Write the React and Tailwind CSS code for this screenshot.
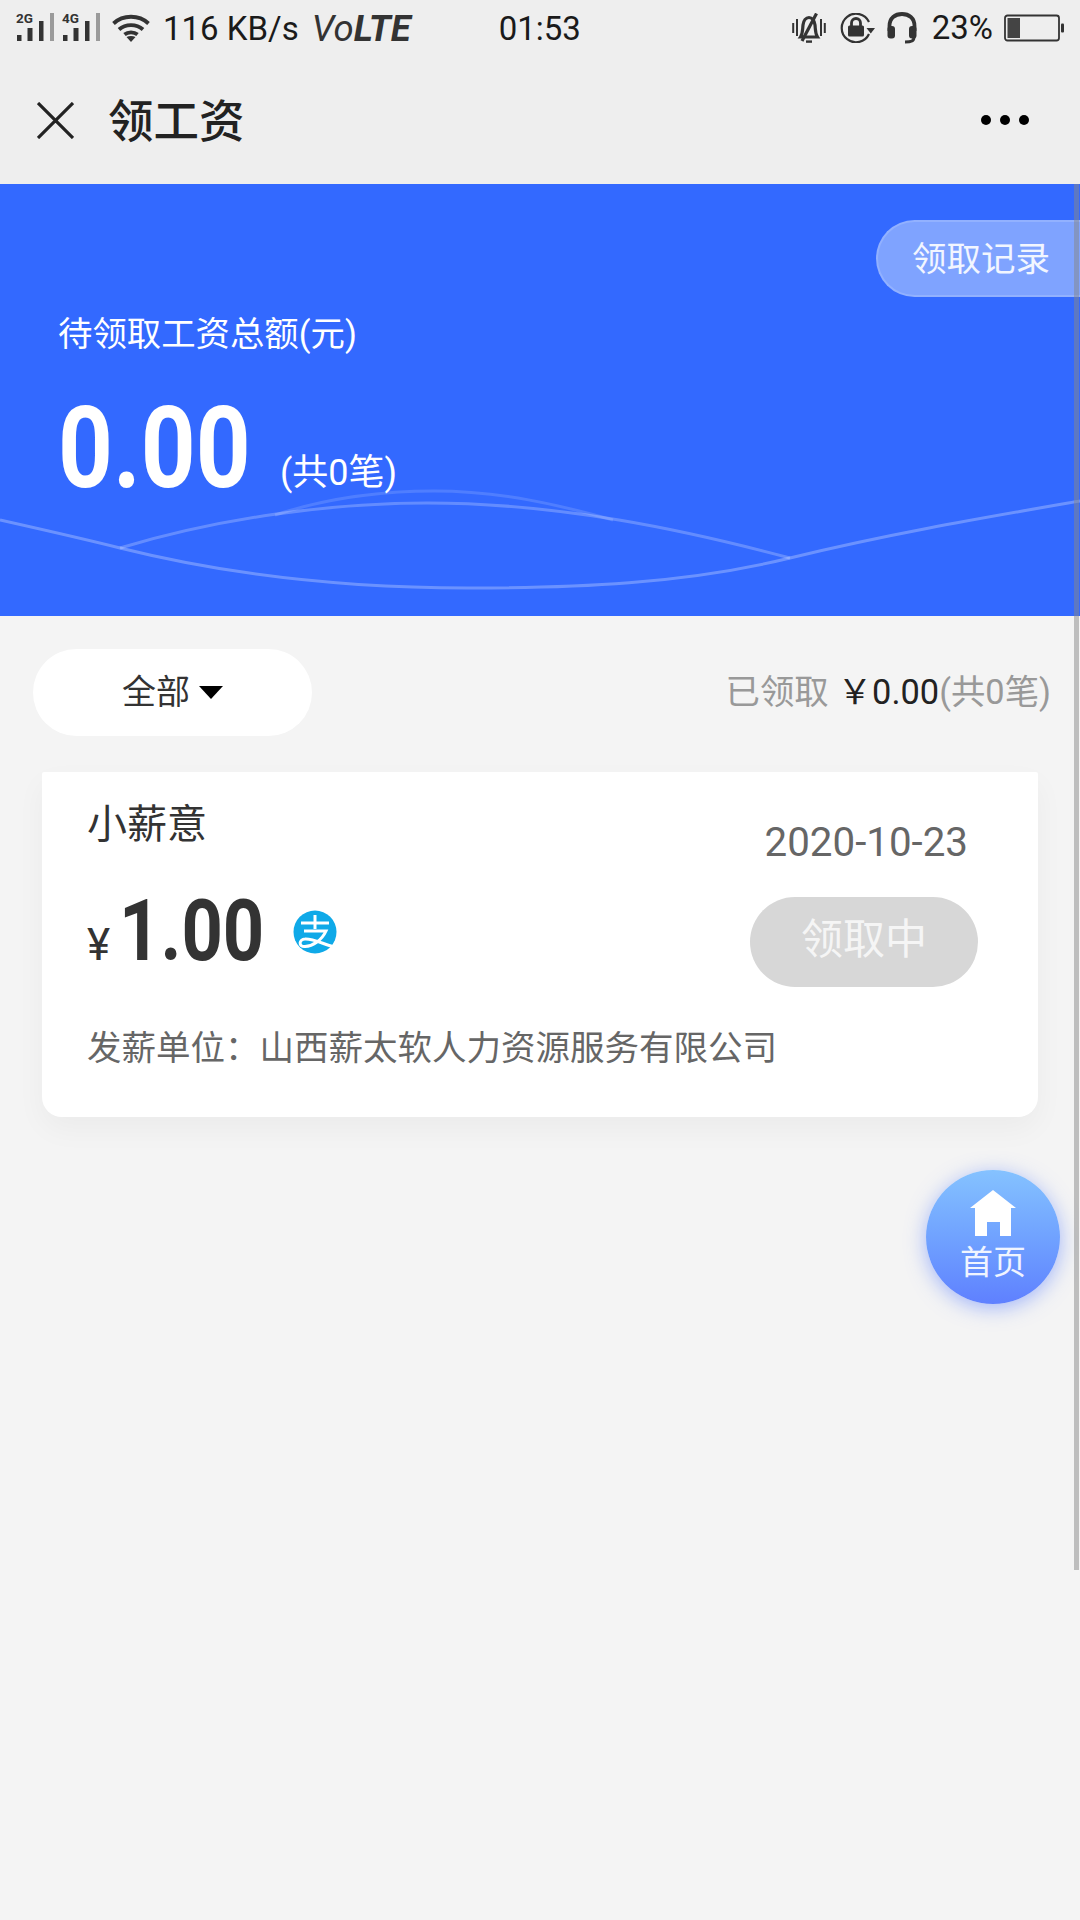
const cjk = { fontFamily: 'Roboto, "Noto Sans CJK SC", sans-serif' };

function Signal({ label }) {
  return (
    <svg width="38" height="30" viewBox="0 0 38 30" className="shrink-0 overflow-visible">
      <text x="0" y="10" fontSize="13.5" fontWeight="700" fill="#333" fontFamily="Roboto, sans-serif">{label}</text>
      <rect x="1" y="22" width="4.5" height="6" fill="#333" />
      <rect x="11.5" y="15" width="5" height="13" fill="#333" />
      <rect x="23" y="8" width="4.5" height="20" fill="#333" />
      <rect x="34" y="0" width="4" height="28" fill="#9a9a9a" />
    </svg>
  );
}

function Wifi() {
  return (
    <svg width="38" height="28" viewBox="0 0 38 28" fill="none" stroke="#333" strokeWidth="3.8" className="shrink-0">
      <path d="M1.5 9.5C11 0.5 27 0.5 36.5 9.5" />
      <path d="M7 15.5C13.5 9.6 24.5 9.6 31 15.5" />
      <path d="M12.5 20.5C16 17.6 22 17.6 25.5 20.5" />
      <path d="M14.5 23L19 28L23.5 23C21 21.6 17 21.6 14.5 23Z" fill="#333" stroke="none" />
    </svg>
  );
}

function Bell() {
  return (
    <svg width="34" height="30" viewBox="0 0 34 30" fill="none" stroke="#333" className="shrink-0">
      <path d="M1.2 10v10M5 6v17M29 6v17M32.8 10v10" strokeWidth="2" />
      <path d="M8.5 24C11 20 10.5 16 11 12C11.6 7.5 14 4.5 17 4.5C20 4.5 22.4 7.5 23 12C23.5 16 23 20 25.5 24Z" strokeWidth="3.2" />
      <path d="M24.5 0.5L10 28" strokeWidth="3.2" />
      <path d="M14 28.6h6" strokeWidth="2.4" />
    </svg>
  );
}

function RotateLock() {
  return (
    <svg width="36" height="30" viewBox="0 0 36 30" fill="none" className="shrink-0">
      <path d="M30 9A14.3 14.3 0 1 0 30 21" stroke="#333" strokeWidth="2.2" />
      <path d="M27.5 15h8.5l-4.2 5.5z" fill="#333" />
      <rect x="9" y="12.5" width="16" height="11" rx="1.5" fill="#333" />
      <path d="M12.5 13v-3a4.5 4.5 0 0 1 9 0v3" stroke="#333" strokeWidth="2.8" />
    </svg>
  );
}

function Headset() {
  return (
    <svg width="30" height="32" viewBox="0 0 30 32" fill="none" className="shrink-0">
      <path d="M2.5 19V14C2.5 6 8 2 15 2C22 2 27.5 6 27.5 14V19" stroke="#333" strokeWidth="3.8" />
      <rect x="0.5" y="14" width="7.5" height="12.5" rx="3" fill="#333" />
      <rect x="22" y="14" width="7.5" height="12.5" rx="3" fill="#333" />
      <path d="M27 25C27 29 24.5 30 18 30" stroke="#333" strokeWidth="3" />
    </svg>
  );
}

function Battery() {
  return (
    <svg width="60" height="28" viewBox="0 0 60 28" fill="none" className="shrink-0">
      <rect x="1" y="1.5" width="54" height="25" rx="2.5" stroke="#333" strokeWidth="1.8" />
      <rect x="3.5" y="4" width="12.5" height="20" fill="#444" />
      <rect x="57" y="9.5" width="3" height="9" rx="1" fill="#333" />
    </svg>
  );
}

function Waves() {
  return (
    <svg className="absolute inset-0 pointer-events-none" width="1080" height="432" viewBox="0 184 1080 432" fill="none">
      <path d="M0 520C40 529 80 538 120 548C236 577 352 588 468 588C574 588 684 584 790 558C888 534 982 518 1080 501" stroke="#fff" strokeOpacity="0.28" strokeWidth="3" />
      <path d="M120 548C220 518 330 503 427 503C560 503 685 530 790 558" stroke="#fff" strokeOpacity="0.24" strokeWidth="3" />
      <path d="M275 515C330 497 380 491 434 491C500 491 560 505 613 520" stroke="#fff" strokeOpacity="0.14" strokeWidth="3" />
    </svg>
  );
}

function Alipay() {
  return (
    <svg width="44" height="46" viewBox="0 0 44 46" fill="none" className="shrink-0">
      <circle cx="22" cy="23" r="21.5" fill="#0fa9e8" />
      <path d="M8 14h28M22 6v14M11 22h22C29 31 20 37 12 37.5C5 38 6 30 12 30C20 29.5 30 35 41 38" stroke="#fff" strokeWidth="3" />
    </svg>
  );
}

export default function App() {
  return (
    <div className="relative w-[1080px] h-[1920px] overflow-hidden bg-[#f4f4f4]" style={cjk}>
      <div className="bg-[#eeeeee] h-[184px]">
        <div className="flex items-center h-[56px] pl-[16px] text-[33px] text-[#1a1a1a]">
          <Signal label="2G" />
          <span className="w-[8px]" />
          <Signal label="4G" />
          <span className="w-[12px]" />
          <Wifi />
          <span className="ml-[13px] mt-[2px]">116 KB/s</span>
          <span className="ml-[13px] mt-[2px] italic text-[#333] text-[36.5px]">Vo<span className="font-bold">LTE</span></span>
          <span className="ml-[88px] mt-[2px]">01:53</span>
          <span className="ml-auto flex items-center pr-[16px]">
            <Bell />
            <span className="w-[13px]" />
            <RotateLock />
            <span className="w-[12px]" />
            <Headset />
            <span className="ml-[15px]">23%</span>
            <span className="w-[11px]" />
            <Battery />
          </span>
        </div>
        <div className="flex items-center h-[128px] pl-[37px] pr-[51px]">
          <svg width="37" height="37" viewBox="0 0 37 37" stroke="#222" strokeWidth="3.2" fill="none">
            <path d="M1 1L36 36M36 1L1 36" />
          </svg>
          <span className="ml-[34px] mt-[6px] text-[45.5px] font-medium text-[#222]">领工资</span>
          <span className="ml-auto flex gap-[9px]">
            <span className="w-[10px] h-[10px] rounded-full bg-black" />
            <span className="w-[10px] h-[10px] rounded-full bg-black" />
            <span className="w-[10px] h-[10px] rounded-full bg-black" />
          </span>
        </div>
      </div>

      <div className="relative h-[432px] bg-[#3369ff] text-white">
        <Waves />
        <div className="flex justify-end pt-[36px]">
          <div className="h-[77px] w-[204px] pl-[34px] pt-[2px] flex items-center rounded-l-full bg-[#7fa3ff] border-2 border-r-0 border-[#92b1ff] text-[34.5px] leading-none text-white/90">领取记录</div>
        </div>
        <div className="relative pl-[58px] pt-[12px] text-[34.4px] leading-[50px]">待领取工资总额(元)</div>
        <div className="relative flex items-end pl-[58px] mt-[29px]">
          <span className="inline-block w-[188px] text-[114px] leading-[120px] font-bold origin-left scale-x-[0.84] whitespace-nowrap">0.00</span>
          <span className="ml-[34px] mb-[10px] text-[36px] leading-[50px]">(共0笔)</span>
        </div>
      </div>

      <div className="flex items-center justify-between pt-[33px] pl-[33px] pr-[29px]">
        <div className="flex items-center justify-center gap-[9px] w-[279px] h-[87px] rounded-full bg-white text-[34px] text-[#333]">
          全部
          <span className="w-0 h-0 border-x-[12px] border-x-transparent border-t-[13px] border-t-black" />
        </div>
        <div className="text-[34.4px] text-[#999]">
          已领取<span className="ml-[9px] text-[#222]">￥0.00</span>(共0笔)
        </div>
      </div>

      <div className="mt-[36px] mx-[42px] h-[345px] bg-white rounded-b-[20px] rounded-t-[2px] shadow-[0_12px_30px_rgba(0,0,0,0.04)] pl-[45px] pr-[60px] flex flex-col">
        <div className="flex justify-between items-start">
          <div className="pt-[28px] text-[40px] leading-[50px] text-[#333]">小薪意</div>
          <div className="pt-[47px] pr-[10px] text-[40.3px] leading-[48px] text-[#666]">2020-10-23</div>
        </div>
        <div className="flex justify-between items-center h-[90px] mt-[30px]">
          <div className="flex items-baseline text-[#333] mb-[20px]">
            <span className="text-[44px]">¥</span>
            <span className="ml-[9px] inline-block w-[141px] text-[86px] leading-[90px] font-bold origin-left scale-x-[0.84] whitespace-nowrap">1.00</span>
            <span className="ml-[33px] self-center"><Alipay /></span>
          </div>
          <div className="w-[228px] h-[90px] rounded-full bg-[#d7d7d7] text-[#f5f5f5] text-[42px] flex items-center justify-center pb-[6px]">领取中</div>
        </div>
        <div className="mt-[36px] text-[34.5px] leading-[50px] text-[#666]">发薪单位：山西薪太软人力资源服务有限公司</div>
      </div>

      <div className="absolute left-[926px] top-[1170px] w-[134px] h-[134px] rounded-full bg-gradient-to-b from-[#85c2ff] to-[#5f80ff] shadow-[0_4px_20px_rgba(80,120,255,0.5)] flex flex-col items-center text-white/90">
        <svg width="46" height="46" viewBox="0 0 46 46" className="mt-[20px]" fill="#fff">
          <path d="M23 0L46 18H41V46H30V32H17V46H5V18H0Z" />
        </svg>
        <span className="text-[33px] leading-[40px] mt-[7px]">首页</span>
      </div>

      <div className="absolute left-[1074px] top-[184px] w-[5px] h-[1386px] bg-[#888] opacity-50" />
    </div>
  );
}
